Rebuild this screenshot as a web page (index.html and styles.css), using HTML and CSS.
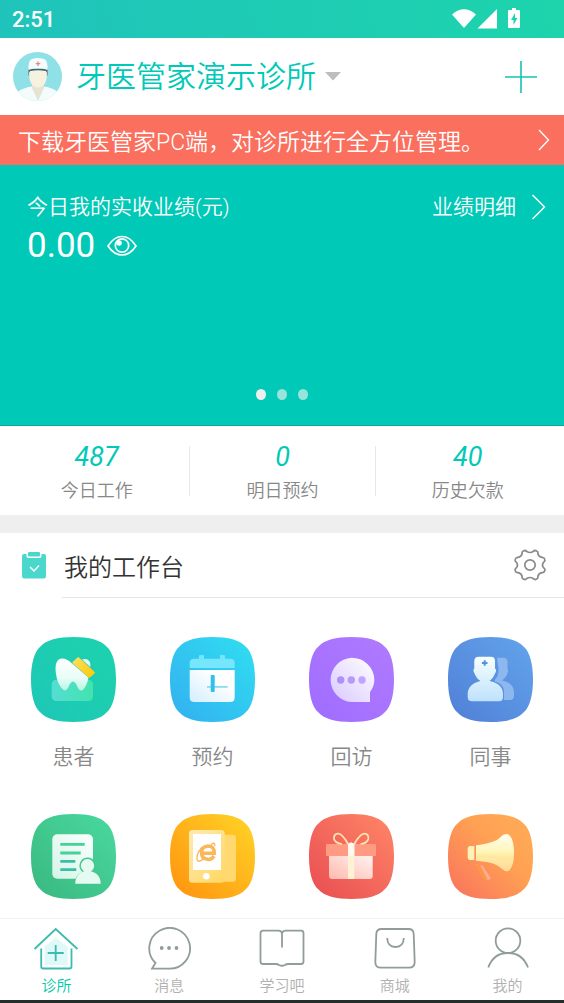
FILE: index.html
```html
<!DOCTYPE html>
<html lang="zh-CN">
<head>
<meta charset="utf-8">
<meta name="viewport" content="width=device-width, initial-scale=1">
<title>牙医管家</title>
<link rel="stylesheet" href="styles.css">
</head>
<body>
<div class="app">
  <div class="status">
    <span class="status-time">2:51</span>
    <svg class="status-icons" width="70" height="22" viewBox="0 0 70 22" fill="#fff">
      <path d="M0 6.500Q12-4 24 6.500L12 20Z"/>
      <path d="M45 1V20.500H25.500Z"/>
      <path d="M57 2h3V0h4v2h3q1 0 1 1v16q0 1-1 1H57q-1 0-1-1V3q0-1 1-1Z"/>
      <path d="M63 5L59 12h2.500v5L65.500 10H63Z" fill="#1fd3b0"/>
    </svg>
  </div>

  <header class="header">
    <svg class="avatar" viewBox="0 0 49 49">
      <defs><clipPath id="face"><circle cx="24.500" cy="24.500" r="24.500"/></clipPath></defs>
      <g clip-path="url(#face)">
        <rect width="49" height="49" fill="#8fe1e7"/>
        <path d="M4 49V40Q12 35 19 34.500H31Q38 35 45 40V49Z" fill="#f3fbfd"/>
        <path d="M19 32H31V36L25 49L19 36Z" fill="#e5e3d2"/>
        <path d="M15.500 23V17H34.500V23L33 25H17Z" fill="#47606b"/>
        <path d="M17 19Q25 17.500 33 19L34 21Q34 31 29.500 34Q25 37 20.500 34Q16 31 16 21Z" fill="#f7f1df"/>
        <path d="M15.500 18Q15 8 19 7Q25 5 31 7Q35 8 34.500 18Q25 14 15.500 18Z" fill="#f5fcfd"/>
        <path d="M25 9.500V14M22.800 11.700H27.200" stroke="#f08378" stroke-width="1.300"/>
      </g>
    </svg>
    <button class="clinic" type="button">
      <span>牙医管家演示诊所</span>
      <svg width="16" height="9" viewBox="0 0 16 9"><path d="M0 0H16L8 8.500Z" fill="#bdbdbd"/></svg>
    </button>
    <button class="add" type="button" aria-label="添加">
      <svg width="32" height="32" viewBox="0 0 32 32" stroke="#14c4b3" stroke-width="1.600"><path d="M16 0V32M0 16H32"/></svg>
    </button>
  </header>

  <a class="banner" href="#download">
    <span>下载牙医管家PC端，对诊所进行全方位管理。</span>
    <svg width="12" height="22" viewBox="0 0 12 22" fill="none" stroke="#fff" stroke-width="1.400"><path d="M1 1L10.500 11L1 21"/></svg>
  </a>

  <section class="hero">
    <div class="hero-row">
      <span>今日我的实收业绩(元)</span>
      <a class="hero-link" href="#details">
        <span>业绩明细</span>
        <svg width="15" height="26" viewBox="0 0 15 26" fill="none" stroke="#fff" stroke-width="1.500"><path d="M1.500 1L13.500 13L1.500 25"/></svg>
      </a>
    </div>
    <div class="amount">
      <span>0.00</span>
      <button type="button" class="eye" aria-label="显示金额">
        <svg width="30" height="22" viewBox="0 0 30 22" fill="none" stroke="#fff" stroke-width="1.700">
          <path d="M1 11Q7 1.500 15 1.500Q23 1.500 29 11Q23 20 15 20Q7 20 1 11Z"/>
          <circle cx="15" cy="10.500" r="6.700"/>
          <circle cx="12" cy="8" r="2.800" fill="#fff" stroke="none"/>
        </svg>
      </button>
    </div>
    <div class="dots"><i class="dot dot-on"></i><i class="dot"></i><i class="dot"></i></div>
  </section>

  <section class="stats">
    <div class="stat"><em>487</em><span>今日工作</span></div>
    <div class="stat"><em>0</em><span>明日预约</span></div>
    <div class="stat"><em>40</em><span>历史欠款</span></div>
  </section>

  <main class="work">
    <div class="work-head">
      <svg class="clip" width="24" height="27" viewBox="0 0 24 27">
        <path d="M2 2H4.500V4Q4.500 6 6.500 6H17.500Q19.500 6 19.500 4V2H22Q24 2 24 4V24Q24 26.500 22 26.500H2Q0 26.500 0 24V4Q0 2 2 2Z" fill="#4bd8cc"/>
        <rect x="6" y="0" width="12" height="4.500" rx="1" fill="#4bd8cc"/>
        <path d="M8 15L12 19L17 13.500" fill="none" stroke="#fff" stroke-width="1.500"/>
      </svg>
      <div class="work-title">
        <h1>我的工作台</h1>
        <button type="button" class="gear" aria-label="设置">
          <svg width="32" height="32" viewBox="0 0 32 32" fill="none" stroke="#8a8a8a" stroke-width="1.700" stroke-linejoin="round">
            <path d="M12.800 2.500Q16 4.500 19.200 2.500Q20.600 .8 22.600 2Q24.300 2.700 23.900 4.800Q24.600 7.800 28 8.400Q30.200 8.300 30.700 10.300Q31.400 12.100 29.600 13.200Q27.400 16 29.600 18.800Q31.400 19.900 30.700 21.700Q30.200 23.700 28 23.600Q24.600 24.200 23.900 27.200Q24.300 29.300 22.600 30Q20.600 31.200 19.200 29.500Q16 27.500 12.800 29.500Q11.400 31.200 9.400 30Q7.700 29.300 8.100 27.200Q7.400 24.200 4 23.600Q1.800 23.700 1.300 21.700Q.6 19.900 2.400 18.800Q4.600 16 2.400 13.200Q.6 12.100 1.300 10.300Q1.800 8.300 4 8.400Q7.400 7.800 8.100 4.800Q7.700 2.700 9.400 2Q11.400 .8 12.800 2.500Z"/>
            <circle cx="16" cy="16" r="5.200"/>
          </svg>
        </button>
      </div>
    </div>

    <svg width="0" height="0" class="defs">
      <defs>
        <path id="tile" d="M42.500 0C58 0 70 3 75.500 9.500C82 15 85 27 85 42.500C85 58 82 70 75.500 75.500C70 82 58 85 42.500 85C27 85 15 82 9.500 75.500C3 70 0 58 0 42.500C0 27 3 15 9.500 9.500C15 3 27 0 42.500 0Z"/>
        <linearGradient id="g1" x1="0" y1="1" x2="1" y2="0"><stop stop-color="#1ec6b7"/><stop offset="1" stop-color="#1cd3ac"/></linearGradient>
        <linearGradient id="g2" x1="0" y1="1" x2="1" y2="0"><stop stop-color="#33aff0"/><stop offset="1" stop-color="#30dff1"/></linearGradient>
        <linearGradient id="g3" x1="0" y1="1" x2="1" y2="0"><stop stop-color="#9f6cff"/><stop offset="1" stop-color="#b07bff"/></linearGradient>
        <linearGradient id="g4" x1="0" y1="1" x2="1" y2="0"><stop stop-color="#507fd6"/><stop offset="1" stop-color="#63a4ec"/></linearGradient>
        <linearGradient id="g5" x1="0" y1="1" x2="1" y2="0"><stop stop-color="#39b880"/><stop offset="1" stop-color="#49d99f"/></linearGradient>
        <linearGradient id="g6" x1="0" y1="1" x2="1" y2="0"><stop stop-color="#ff910e"/><stop offset="1" stop-color="#ffd528"/></linearGradient>
        <linearGradient id="g7" x1="0" y1="1" x2="1" y2="0"><stop stop-color="#e84c52"/><stop offset="1" stop-color="#ff8767"/></linearGradient>
        <linearGradient id="g8" x1="0" y1="1" x2="1" y2="0"><stop stop-color="#f9705e"/><stop offset=".6" stop-color="#ffa253"/><stop offset="1" stop-color="#ffac56"/></linearGradient>
        <linearGradient id="base" x1="0" y1="0" x2="1" y2="0"><stop stop-color="#5fe0d8"/><stop offset="1" stop-color="#48e8ac"/></linearGradient>
        <linearGradient id="tooth" x1="0" y1="0" x2="0" y2="1"><stop stop-color="#fff"/><stop offset=".6" stop-color="#e9fdf8"/><stop offset="1" stop-color="#b9f5e2"/></linearGradient>
        <linearGradient id="brush" x1="0" y1="0" x2="1" y2="1"><stop stop-color="#ffdf65"/><stop offset="1" stop-color="#fbc900"/></linearGradient>
        <linearGradient id="cal" x1="0" y1="1" x2="1" y2="0"><stop stop-color="#d3eefd"/><stop offset=".7" stop-color="#fff"/></linearGradient>
        <linearGradient id="bubble" x1="0" y1="1" x2="1" y2="0"><stop stop-color="#d9c8ff"/><stop offset="1" stop-color="#fff"/></linearGradient>
        <linearGradient id="doc" x1="0" y1="0" x2="0" y2="1"><stop stop-color="#f7fffc"/><stop offset="1" stop-color="#bfe1fd"/></linearGradient>
        <linearGradient id="page" x1="0" y1="1" x2="1" y2="0"><stop stop-color="#d5f4e8"/><stop offset="1" stop-color="#fafffd"/></linearGradient>
        <linearGradient id="phone" x1="0" y1="0" x2="1" y2="1"><stop stop-color="#ffeab4"/><stop offset="1" stop-color="#ffd761"/></linearGradient>
        <linearGradient id="box" x1="0" y1="1" x2="1" y2="0"><stop stop-color="#ffb9ae"/><stop offset="1" stop-color="#fff3f0"/></linearGradient>
        <linearGradient id="horn" x1="0" y1="0" x2="0" y2="1"><stop stop-color="#fffdf0"/><stop offset=".45" stop-color="#fff6bd"/><stop offset=".55" stop-color="#fff0a8"/><stop offset="1" stop-color="#ffd796"/></linearGradient>
      </defs>
    </svg>

    <nav class="grid">
      <a class="item" href="#patients">
        <svg class="tile" viewBox="0 0 85 85"><use href="#tile" fill="url(#g1)"/>
          <rect x="20.700" y="42.700" width="41.300" height="21.300" rx="4.500" fill="url(#base)" opacity=".85"/>
          <path d="M31 21.500Q36 21.500 40.500 26L57.500 40.500Q56 49 51.500 53.300Q49 54.500 47 51Q44.500 44.500 42 44.500Q39.500 44.500 37 51Q35 54.500 32.500 53Q26 47.500 24.700 35Q23.500 22 31 21.500Z" fill="url(#tooth)"/>
          <path d="M51 22.500Q57.500 20.500 59.300 26.500V30Z" fill="#e3fbf5"/>
          <path d="M46.800 20.300Q47.500 20 48 20.500L63.700 35Q64.300 35.700 63.700 36.300L59 40.500Q58.300 41 57.700 40.500L41.600 26.200Q41 25.500 41.600 24.900Z" fill="url(#brush)"/>
        </svg><span>患者</span></a>
      <a class="item" href="#booking">
        <svg class="tile" viewBox="0 0 85 85"><use href="#tile" fill="url(#g2)"/>
          <path d="M29 23V19Q29 18 30 18H33Q34 18 34 19V23ZM50 23V19Q50 18 51 18H54Q55 18 55 19V23Z" fill="#74e5fb"/>
          <path d="M19.700 31V26Q19.700 21.700 24 21.700H60.400Q64.700 21.700 64.700 26V31Z" fill="#76e6fc"/>
          <path d="M19.700 33H64.700V60.500Q64.700 65 60.200 65H24.200Q19.700 65 19.700 60.500Z" fill="url(#cal)"/>
          <path d="M37 49.900H57.700" stroke="#86d9f4" stroke-width="1.700"/>
          <rect x="40.700" y="38" width="4" height="17" rx="1" fill="#32bfee"/>
        </svg><span>预约</span></a>
      <a class="item" href="#visits">
        <svg class="tile" viewBox="0 0 85 85"><use href="#tile" fill="url(#g3)"/>
          <path d="M42.500 20.700A22.600 22.200 0 0 1 65.300 43Q65.300 49.500 61 55V65H42.500A22.400 22.200 0 0 1 42.500 20.700Z" fill="url(#bubble)"/>
          <circle cx="31.700" cy="43" r="3.700" fill="#af90f6"/><circle cx="42.300" cy="43" r="3.700" fill="#b799fa"/><circle cx="53" cy="43" r="3.700" fill="#c3a3ff"/>
        </svg><span>回访</span></a>
      <a class="item" href="#colleagues">
        <svg class="tile" viewBox="0 0 85 85"><use href="#tile" fill="url(#g4)"/>
          <path d="M49 20.700H55Q59.500 20.700 59.500 25V32Q61 33 59.500 36Q58.500 40 54 43.500C62 45 66 49 66 56V59Q66 63 62 63H56V56C56 49 53 46.500 47 44.500Q46 43.500 47.500 42Q51 38 50.500 31Z" fill="#8db7ef"/>
          <path d="M31 19.700H43Q47 19.700 47 24V31.500Q49 32.500 47.300 36Q45.500 41 41.500 44C50 45.500 55 50 55 57V60Q55 64.300 51 64.300H24Q19.700 64.300 19.700 60V57C19.700 50 25 45.500 32.500 44Q28 41 26.300 36Q24.500 32.500 26.300 31.500V24Q26.300 19.700 31 19.700Z" fill="url(#doc)"/>
          <path d="M36.700 23.200V28.800M33.900 26H39.500" stroke="#5991e1" stroke-width="2"/>
        </svg><span>同事</span></a>
      <a class="item" href="#records" aria-label="病历">
        <svg class="tile" viewBox="0 0 85 85"><use href="#tile" fill="url(#g5)"/>
          <rect x="21.300" y="20.300" width="40.700" height="44.400" rx="5" fill="url(#page)"/>
          <g stroke="#45d19a" stroke-width="2.800"><path d="M29.300 30.300H53.700M29.300 39H49.700"/><path d="M29.300 47.300H44.300M29.300 55.700H45.300" stroke="#39bfa4"/></g>
          <path d="M56.300 43.500A8.200 8.200 0 0 1 61.500 58Q69 60 71 69.700H43Q45 60 51.500 58A8.200 8.200 0 0 1 56.300 43.500Z" fill="#42c98f"/>
          <path d="M44.300 69.700C44.300 63 48 58.500 53 57.500A6.700 6.700 0 1 1 60 57.500C66 58.500 69.700 63 69.700 69.700Z" fill="#e5faf1"/>
        </svg></a>
      <a class="item" href="#site" aria-label="微官网">
        <svg class="tile" viewBox="0 0 85 85"><use href="#tile" fill="url(#g6)"/>
          <path d="M54 20.700H62.500Q66 20.700 66 24V64.500Q66 67.700 62.500 67.700H54Z" fill="#ffd96f"/>
          <rect x="19" y="16" width="35.700" height="52.700" rx="3.500" fill="url(#phone)"/>
          <path d="M23 20H51V56H23Z" fill="#fff"/><circle cx="36.300" cy="62.300" r="3.300" fill="#fff"/>
          <g fill="none" stroke="#f9b85c"><path d="M44 42Q41.500 46 37.500 45.300Q31.500 44.800 31.500 38.500Q32 32.300 38 32Q44.500 32 44.200 39.200H32" stroke-width="3.500"/><path d="M41 30.500Q46 27.500 44.500 32M32 33Q25 42 27.500 46.500Q29.500 48.500 34 44.500" stroke-width="1.400"/></g>
        </svg></a>
      <a class="item" href="#gifts" aria-label="礼品">
        <svg class="tile" viewBox="0 0 85 85"><use href="#tile" fill="url(#g7)"/>
          <path d="M20 42H63.700V62Q63.700 65 60.500 65H23.200Q20 65 20 62Z" fill="url(#box)"/>
          <rect x="17" y="30" width="50" height="12" rx="1" fill="#ff9b82"/>
          <path d="M39 30Q33 19 28.500 19.700Q24.500 20.500 25 25Q26 29 33 30M45.300 30Q51.500 19 56 19.700Q60 20.500 59.300 25Q58.500 29 51.500 30" fill="none" stroke="#ffe5b0" stroke-width="1.700"/>
          <path d="M39 30Q42 27 45.300 30V65H39Z" fill="#fff1d4"/><path d="M39 30Q42 27 45.300 30V42H39Z" fill="#fffaf0"/>
        </svg></a>
      <a class="item" href="#promotion" aria-label="推广">
        <svg class="tile" viewBox="0 0 85 85"><use href="#tile" fill="url(#g8)"/>
          <path d="M28 50.300L34.500 51.500L42.500 63.500Q43 65.500 41 65.700H38Q36.500 65.700 35.500 64Z" fill="#ffac91"/><path d="M28 50.300L32 51L39.500 65.700H38Q36.500 65.700 35.500 64Z" fill="#ff963f"/>
          <path d="M22 32H26.300V46H22Q19.700 46 19.700 43.500V34.500Q19.700 32 22 32Z" fill="#fff2b9"/>
          <path d="M28 31.300C40 29.500 48 28 52.500 23Q56 19 60 20.200C64 22 66 30 66 38C66 47 64 55 60.500 57Q57 58 53.500 54.500C48 49 40 48 28 46.700Z" fill="url(#horn)"/>
          <path d="M28 41L65.800 43L65 50Q50 44 28 44Z" fill="#ffe3a0" opacity=".55"/>
        </svg></a>
    </nav>
  </main>

  <nav class="tabs">
    <a class="tab tab-on" href="#clinic">
      <svg width="46" height="44" viewBox="0 0 46 44" fill="none" stroke="#3dbbb0" stroke-width="1.800">
        <path d="M11.600 19.700L22.600 10.700L34.600 19.700V38H11.600Z" fill="#def9f7" stroke="none"/>
        <path d="M1.500 22L22.700 2L44.500 22M8.200 21.500V39.500Q8.200 41.500 10.200 41.500H36.500Q38.500 41.500 38.500 39.500V21.500M22.700 18V34M14.700 26H30.700"/>
      </svg><span>诊所</span></a>
    <a class="tab" href="#messages">
      <svg width="46" height="44" viewBox="0 0 46 44" fill="none" stroke="#909d98" stroke-width="1.800">
        <path d="M23 41.700H6L9.500 36A20.400 20.400 0 1 1 23 41.700Z"/>
        <g fill="#909d98" stroke="none"><circle cx="15.700" cy="21" r="1.900"/><circle cx="23" cy="21" r="1.900"/><circle cx="30.500" cy="21" r="1.900"/></g>
      </svg><span>消息</span></a>
    <a class="tab" href="#learn">
      <svg width="46" height="44" viewBox="0 0 46 44" fill="none" stroke="#909d98" stroke-width="1.800">
        <path d="M23 20.500V6.500Q22.500 3.700 19.500 3.700H4Q1.500 3.700 1.500 6.200V34.500Q1.500 37 4 37H16.500Q19 37 20 38Q23 39.500 26 38Q27 37 29.500 37H42Q44.500 37 44.500 34.500V6.200Q44.500 3.700 42 3.700H26.500Q23.500 3.700 23 6.500"/>
      </svg><span>学习吧</span></a>
    <a class="tab" href="#mall">
      <svg width="46" height="44" viewBox="0 0 46 44" fill="none" stroke="#909d98" stroke-width="1.800">
        <path d="M9.500 2H36.500Q41.500 2 41.700 7L42.700 35Q42.700 40.700 37 40.700H9Q3.300 40.700 3.300 35L4.300 7Q4.500 2 9.500 2Z"/><path d="M15.200 11Q15.500 20 23.500 20Q31.500 20 31.800 11"/>
      </svg><span>商城</span></a>
    <a class="tab" href="#me">
      <svg width="46" height="44" viewBox="0 0 46 44" fill="none" stroke="#909d98" stroke-width="1.800">
        <circle cx="23" cy="13.700" r="12.300"/><path d="M3.300 40.500Q8.500 26 23 26Q37.500 26 43 40.500"/>
      </svg><span>我的</span></a>
  </nav>
</div>
</body>
</html>
```

FILE: styles.css
```css
* { box-sizing: border-box; }

body {
  margin: 0;
  background: #fff;
  font-family: Roboto, "Noto Sans CJK SC DemiLight", "Noto Sans CJK SC", sans-serif;
  font-weight: 350;
}

a { color: inherit; text-decoration: none; }

button {
  padding: 0;
  border: 0;
  background: none;
  color: inherit;
  font: inherit;
  cursor: pointer;
}

svg { display: block; flex: none; }

.app {
  display: flex;
  flex-direction: column;
  height: 100vh;
  border-bottom: 3px solid #232d2a;
}

.app > * { flex: none; }

.status {
  display: flex;
  align-items: center;
  justify-content: space-between;
  height: 38px;
  padding: 0 42px 0 12px;
  background: linear-gradient(75deg, #1fc3bb, #1dd4ac);
  color: #fff;
}

.status-time { font-size: 22px; font-weight: 500; }

.header {
  display: flex;
  align-items: center;
  height: 77px;
  padding: 0 27px 0 13px;
}

.avatar { width: 49px; height: 49px; }

.clinic {
  display: flex;
  align-items: center;
  gap: 9px;
  margin-left: 14px;
  color: #00c9b7;
  font-size: 30px;
  line-height: 46px;
}

.add { margin-left: auto; }

.banner {
  display: flex;
  align-items: center;
  justify-content: space-between;
  height: 50px;
  padding: 0 14px 0 18px;
  background: #fa6f5d;
  color: #fff;
  font-size: 23px;
}

.hero {
  display: flex;
  flex-direction: column;
  height: 261px;
  padding: 27px 18px 25px 27px;
  border-bottom: 1px solid #0aa999;
  background: #00c9b7;
  color: #fff;
}

.hero-row {
  display: flex;
  align-items: center;
  justify-content: space-between;
  font-size: 21px;
  line-height: 30px;
}

.hero-link { display: flex; align-items: center; gap: 15px; }

.amount {
  display: flex;
  align-items: center;
  gap: 12px;
  font-size: 35px;
  font-weight: 400;
  line-height: 48px;
}

.dots {
  display: flex;
  justify-content: center;
  gap: 11px;
  margin: auto 9px 0 0;
}

.dot { width: 10px; height: 11px; border-radius: 50%; background: #99e4da; }
.dot-on { background: #eee; }

.stats {
  display: grid;
  grid-template-columns: repeat(3, 1fr);
  padding: 20px 4px 19px;
}

.stat {
  display: flex;
  flex-direction: column;
  align-items: center;
  height: 50px;
}

.stat + .stat { border-left: 1px solid #e8e8e8; }

.stat em {
  color: #00c9b7;
  font-size: 27px;
  font-weight: 400;
  line-height: 22px;
}

.stat span {
  margin-top: 10px;
  color: #888;
  font-size: 18px;
  line-height: 26px;
}

.app > .work {
  flex: 1 1 0;
  min-height: 0;
  overflow: hidden;
  border-top: 18px solid #efefef;
}

.work-head {
  display: flex;
  align-items: center;
  gap: 16px;
  padding-left: 22px;
}

.work-title {
  display: flex;
  flex: 1;
  align-items: center;
  justify-content: space-between;
  height: 65px;
  padding: 0 18px 0 2px;
  border-bottom: 1px solid #e6e6e6;
}

h1 {
  margin: 0;
  color: #333;
  font-size: 24px;
  font-weight: 350;
}

.defs { position: absolute; }

.grid {
  display: grid;
  grid-template-columns: repeat(4, 1fr);
  row-gap: 42px;
  padding: 39px 4px 20px;
}

.item {
  display: flex;
  flex-direction: column;
  align-items: center;
  gap: 20px;
  color: #888;
  font-size: 21px;
  line-height: 30px;
}

.tile { width: 85px; height: 85px; }

.tabs {
  display: grid;
  grid-template-columns: repeat(5, 1fr);
  height: 82px;
  padding-top: 8px;
  border-top: 1px solid #f1f1f1;
  background: #fff;
}

.tab {
  display: flex;
  flex-direction: column;
  align-items: center;
  gap: 4px;
  color: #b0b0b0;
  font-size: 15px;
  line-height: 22px;
}

.tab-on { color: #00c9a7; }
```
